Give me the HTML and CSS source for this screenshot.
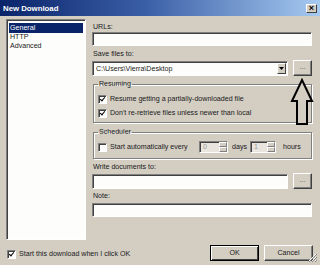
FILE: index.html
```html
<!DOCTYPE html>
<html>
<head>
    <meta charset="UTF-8">
    <title>New Download</title>
    <link rel="stylesheet" href="styles.css">
</head>
<body>
    <div class="window">
        <div class="titlebar">
            <span class="title">New Download</span>
            <span class="close">&#215;</span>
        </div>
        <div class="main">
            <ul class="nav">
                <li class="active">General</li>
                <li>HTTP</li>
                <li>Advanced</li>
            </ul>
            <div class="form">
                <div class="label first">URLs:</div>
                <div class="field full"></div>

                <div class="label">Save files to:</div>
                <div class="row">
                    <div class="field combo">
                        <span class="value">C:\Users\Vierra\Desktop</span>
                        <span class="drop"><svg width="5" height="3" viewBox="0 0 5 3"><path d="M0 0h5L2.5 3z" fill="#000"/></svg></span>
                    </div>
                    <div class="btn browse">...</div>
                </div>

                <fieldset class="group resume">
                    <legend>Resuming</legend>
                    <div class="check-row"><span class="box checked"></span>Resume getting a partially-downloaded file</div>
                    <div class="check-row"><span class="box checked"></span>Don't re-retrieve files unless newer than local</div>
                </fieldset>

                <fieldset class="group sched">
                    <legend>Scheduler</legend>
                    <div class="check-row">
                        <span class="box"></span>
                        <span class="sched-text">Start automatically every</span>
                        <span class="spin days-spin"><span class="spin-val">0</span><span class="spin-btns"><i></i><i></i></span></span>
                        <span class="unit">days</span>
                        <span class="spin hours-spin"><span class="spin-val">1</span><span class="spin-btns"><i></i><i></i></span></span>
                        <span class="unit hours">hours</span>
                    </div>
                </fieldset>

                <div class="label write">Write documents to:</div>
                <div class="row">
                    <div class="field combo"></div>
                    <div class="btn browse">...</div>
                </div>

                <div class="label note">Note:</div>
                <div class="field full note-field"></div>
            </div>
        </div>
        <div class="footer">
            <div class="check-row start"><span class="box checked"></span>Start this download when I click OK</div>
            <div class="buttons">
                <div class="btn push default">OK</div>
                <div class="btn push">Cancel</div>
            </div>
        </div>
        <!-- annotation arrow drawn over the dialog -->
        <svg class="arrow" width="24" height="50" viewBox="0 0 24 50">
            <path d="M12 2 L22 23 L17 23 L17 46 L7 46 L7 23 L2 23 Z" fill="#d3cdc2" stroke="#000" stroke-width="2" stroke-linejoin="miter"/>
        </svg>
        <svg class="grip" width="9" height="9" viewBox="0 0 9 9">
            <path d="M8 1L1 8M8 4L4 8M8 7L7 8" stroke="#fff" stroke-width="1"/>
            <path d="M9 1L1 9M9 4L4 9M9 7L7 9" stroke="#808080" stroke-width="1"/>
        </svg>
    </div>
</body>
</html>
```
FILE: styles.css
```css
body {
    margin: 0;
    background: #d3cdc2;
}
.window {
    position: relative;
    width: 320px;
    height: 265px;
    background: #d3cdc2;
    font: 7.1px "Liberation Sans", Arial, sans-serif;
    color: #1a1a1a;
    overflow: hidden;
}
.titlebar {
    height: 16px;
    display: flex;
    align-items: center;
    justify-content: space-between;
    padding: 0 3px 0 3px;
    box-sizing: border-box;
    background: linear-gradient(to right, #0a246a, #3a5ea6 45%, #a6caf0);
}
.title {
    color: #fff;
    font-weight: bold;
    font-size: 7.8px;
}
.close {
    width: 11px;
    height: 9px;
    box-sizing: border-box;
    background: #d3cdc2;
    border: 1px solid;
    border-color: #fff #404040 #404040 #fff;
    font: bold 9px/6px "Liberation Sans", sans-serif;
    text-align: center;
    color: #000;
}
.main {
    display: flex;
    gap: 6px;
    padding: 3px 0 0 6px;
    height: 224px;
    box-sizing: border-box;
}
.nav {
    width: 80px;
    height: 221px;
    margin: 0;
    padding: 2px 2px;
    box-sizing: border-box;
    list-style: none;
    background: #fdfdfb;
    color: #1a1a1a;
    border: 1px solid;
    border-color: #808080 #fff #fff #808080;
    box-shadow: inset 1px 1px #404040;
}
.nav li {
    height: 9px;
    line-height: 9px;
    padding-left: 1px;
}
.nav li.active {
    background: #0a246a;
    color: #fff;
    margin-top: 1px;
    height: 10px;
    line-height: 10px;
}
.form {
    width: 220px;
    display: flex;
    flex-direction: column;
}
.label {
    height: 10px;
    line-height: 10px;
    margin-top: 3px;
    padding-left: 1px;
}
.label.write { margin-top: 3px; }
.label.note { margin-top: 2px; }
.field {
    height: 14px;
    box-sizing: border-box;
    background: #fdfdfb;
    border: 1px solid;
    border-color: #808080 #fff #fff #808080;
    box-shadow: inset 1px 1px #404040;
}
.note-field { margin-top: 2px; }
.row {
    display: flex;
    gap: 5px;
    margin-top: 1px;
    height: 16px;
}
.combo {
    width: 196px;
    height: 15px;
    margin-top: 1px;
    display: flex;
    align-items: center;
    justify-content: space-between;
    padding: 0 1px 0 3px;
}
.drop {
    width: 9px;
    height: 11px;
    box-sizing: border-box;
    background: #d3cdc2;
    border: 1px solid;
    border-color: #fff #404040 #404040 #fff;
    display: flex;
    align-items: center;
    justify-content: center;
}
.btn {
    box-sizing: border-box;
    background: #d3cdc2;
    border: 1px solid;
    border-color: #fff #404040 #404040 #fff;
    box-shadow: inset -1px -1px #808080;
    display: flex;
    align-items: center;
    justify-content: center;
}
.browse {
    width: 19px;
    height: 16px;
    color: #555;
    padding-bottom: 2px;
}
.group {
    margin: 3px 0 0 1px;
    padding: 0 4px 2px 4px;
    border: 1px solid #808080;
    box-shadow: 1px 1px #fff, inset 1px 1px #fff;
}
.group legend {
    padding: 0 1px;
    line-height: 10px;
}
.resume .check-row:first-of-type { margin-top: 3px; }
.sched {
    margin-top: 4px;
    padding-bottom: 4px;
}
.sched .check-row { margin-top: 3px; }
.check-row {
    display: flex;
    align-items: center;
    height: 14px;
}
.box {
    width: 9px;
    height: 9px;
    box-sizing: border-box;
    background: #fdfdfb;
    border: 1px solid;
    border-color: #808080 #fff #fff #808080;
    box-shadow: inset 1px 1px #404040;
    margin-right: 3px;
    position: relative;
}
.box.checked::after {
    content: "";
    position: absolute;
    left: 2px;
    top: 0px;
    width: 2px;
    height: 4px;
    border: solid #000;
    border-width: 0 1.5px 1.5px 0;
    transform: rotate(40deg);
}
.sched-text { width: 89px; }
.spin {
    display: flex;
    height: 12px;
    box-sizing: border-box;
    background: #e9e5de;
    border: 1px solid;
    border-color: #808080 #fff #fff #808080;
    box-shadow: inset 1px 1px #404040;
}
.days-spin { width: 29px; }
.hours-spin { width: 26px; }
.spin-val {
    flex: 1;
    color: #999;
    padding-left: 3px;
    line-height: 10px;
}
.spin-btns {
    width: 8px;
    display: flex;
    flex-direction: column;
}
.spin-btns i {
    flex: 1;
    background: #d3cdc2;
    border: 1px solid;
    border-color: #fff #808080 #808080 #fff;
}
.unit {
    width: 22px;
    padding-left: 4px;
    box-sizing: border-box;
}
.unit.hours { padding-left: 7px; width: auto; }
.footer {
    display: flex;
    justify-content: space-between;
    align-items: center;
    height: 22px;
    padding: 3px 7px 0 7px;
    box-sizing: border-box;
}
.start { margin-top: 3px; }
.buttons {
    display: flex;
    gap: 5px;
}
.push {
    width: 49px;
    height: 16px;
}
.push.default {
    border-color: #000;
    box-shadow: inset 1px 1px #fff, inset -1px -1px #404040;
}
.arrow {
    position: absolute;
    left: 290px;
    top: 78px;
}
.grip {
    position: absolute;
    right: 3px;
    bottom: 3px;
}
```
